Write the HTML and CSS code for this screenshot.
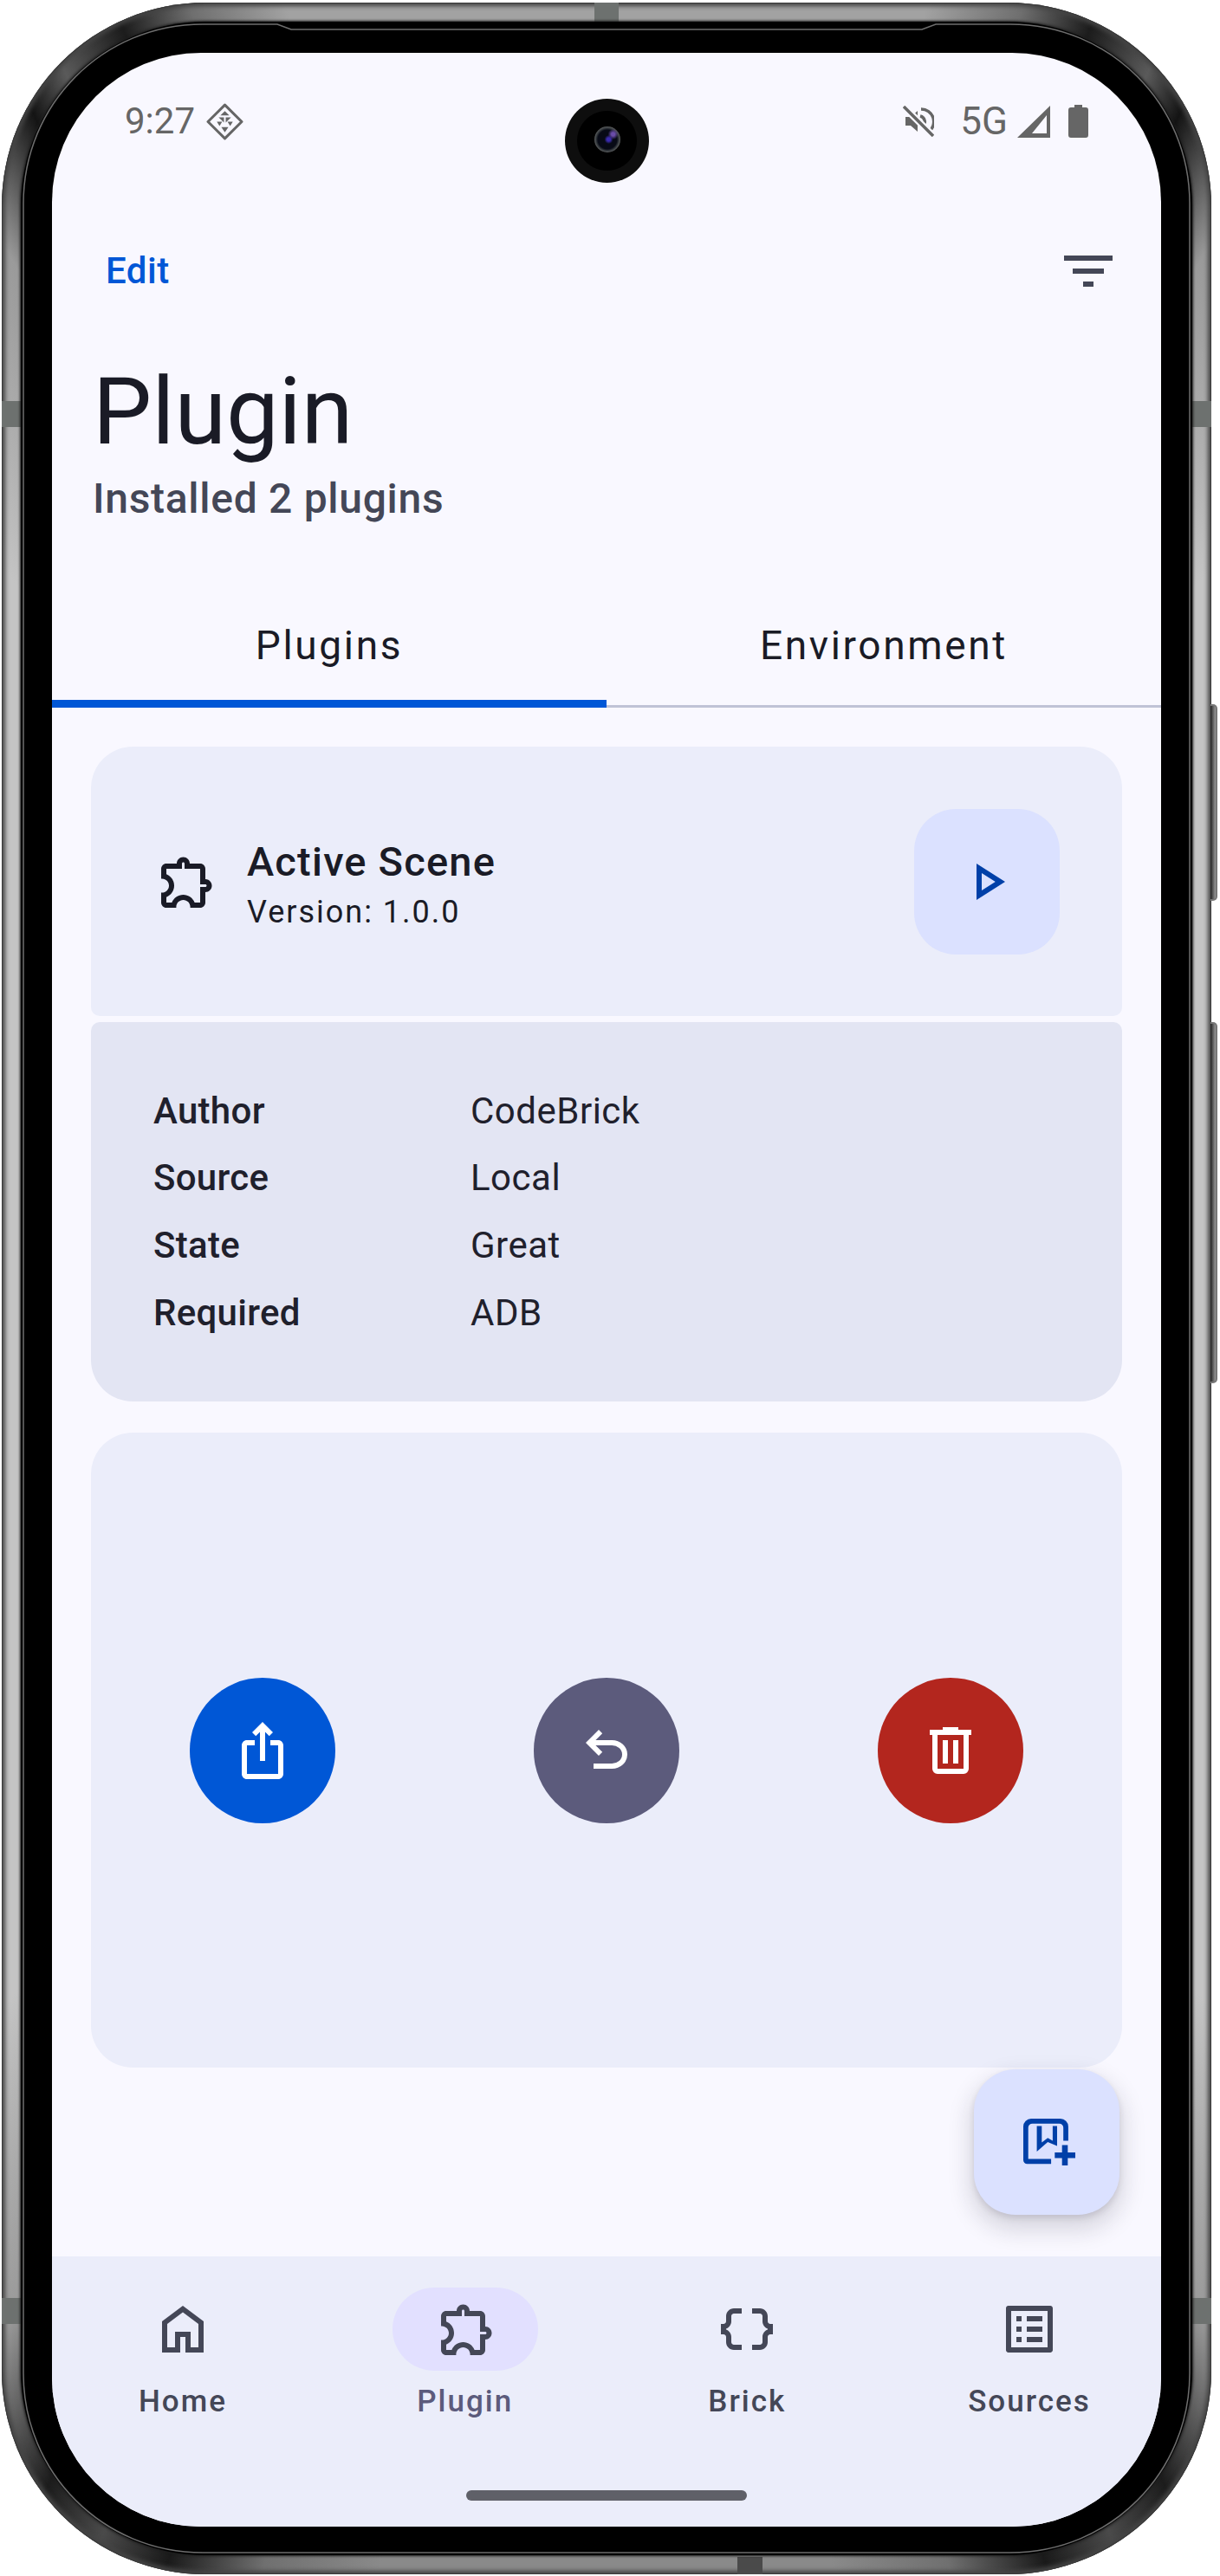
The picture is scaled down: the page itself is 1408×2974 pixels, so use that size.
FILE: index.html
```html
<!DOCTYPE html>
<html lang="en">
<head>
<meta charset="utf-8">
<title>Plugin</title>
<link rel="stylesheet" href="styles.css">
</head>
<body>
<div class="frame">
  <span class="seg seg-top"></span>
  <span class="seg seg-bottom"></span>
  <span class="seg seg-lt"></span>
  <span class="seg seg-lb"></span>
  <span class="seg seg-rt"></span>
  <span class="seg seg-rb"></span>
  <span class="key key-1"></span>
  <span class="key key-2"></span>
  <div class="bezel">
    <svg class="hairline" viewBox="0 0 1352 2925" aria-hidden="true">
      <path d="M296 3H210C95 3 3 95 3 210V2715C3 2830 95 2922 210 2922H1142C1257 2922 1349 2830 1349 2715V210C1349 95 1257 3 1142 3H1056L1040 9H312Z"/>
    </svg>
    <div class="screen">
      <div class="camera"><span class="lens"></span></div>

      <div class="statusbar">
        <div class="status-left">
          <span class="status-text">9:27</span>
          <svg class="sym-diamond" viewBox="0 0 42 42" aria-hidden="true">
            <path class="diamond-outline" d="M21 2 40 21 21 40 2 21Z"/>
            <path class="diamond-fill" d="M21 9l5 5H16ZM14 16h6v6ZM22 16h6l-6 6ZM12 21l6 0-3 5ZM30 21l-6 0 3 5ZM17 27h8l-4 6Z"/>
          </svg>
        </div>
        <div class="status-right">
          <svg class="sym-mute" viewBox="0 0 36 36" aria-hidden="true">
            <path class="mute-fill" d="M3 13h6l8-7v24l-8-7H3Z"/>
            <path class="mute-stroke" d="M21 4a14.500 14.500 0 0 1 9 26M20 12a7 7 0 0 1 3 12"/>
            <path class="mute-cut" d="M1 1 35 35"/>
            <path class="mute-slash" d="M1 1 35 35"/>
          </svg>
          <span class="status-text status-5g">5G</span>
          <svg class="sym-signal" viewBox="0 0 38 37" aria-hidden="true">
            <path fill-rule="evenodd" d="M38 0V37H0ZM34 11 17 32H34Z"/>
          </svg>
          <svg class="sym-battery" viewBox="0 0 23 38" aria-hidden="true">
            <path d="M7 0h9v3h4a3 3 0 0 1 3 3v29a3 3 0 0 1-3 3H3a3 3 0 0 1-3-3V6a3 3 0 0 1 3-3h4Z"/>
          </svg>
        </div>
      </div>

      <div class="topbar">
        <span class="edit">Edit</span>
        <svg class="icon icon-dark" viewBox="0 0 72 72" aria-hidden="true">
          <path d="M8 18H64V24H8ZM18 33H54V39H18ZM30 48H42V54H30Z"/>
        </svg>
      </div>

      <div class="heading">
        <h1 class="title">Plugin</h1>
        <p class="subtitle">Installed 2 plugins</p>
      </div>

      <div class="tabs">
        <div class="tab tab-active">Plugins</div>
        <div class="tab">Environment</div>
      </div>

      <main class="content">
        <section class="card card-head">
          <svg class="icon icon-ink" viewBox="0 0 24 24" aria-hidden="true">
            <path d="M10.500 4.500c.28 0 .5.22.5.5v2h6v6h2c.28 0 .5.22.5.5s-.22.5-.5.5h-2v6h-2.120c-.68-1.750-2.390-3-4.380-3s-3.700 1.250-4.380 3H4v-2.120c1.750-.68 3-2.390 3-4.380 0-1.990-1.240-3.700-2.990-4.380L4 7h6V5c0-.28.22-.5.5-.5m0-2C9.120 2.500 8 3.620 8 5H4c-1.100 0-1.990.9-1.990 2v3.800h.29c1.490 0 2.700 1.210 2.700 2.700s-1.210 2.700-2.700 2.700H2V20c0 1.100.9 2 2 2h3.800v-.3c0-1.490 1.210-2.700 2.700-2.700s2.700 1.210 2.700 2.700v.3H17c1.100 0 2-.9 2-2v-4c1.380 0 2.500-1.120 2.500-2.500S20.380 11 19 11V7c0-1.100-.9-2-2-2h-4c0-1.380-1.120-2.500-2.500-2.500z"/>
          </svg>
          <div class="head-text">
            <div class="head-title">Active Scene</div>
            <div class="head-version">Version: 1.0.0</div>
          </div>
          <button class="tonal-btn">
            <svg class="icon icon-blue" viewBox="0 0 24 24" aria-hidden="true">
              <path d="M8 19V5l11 7-11 7Zm2-3.650L15.250 12 10 8.650v6.700Z"/>
            </svg>
          </button>
        </section>

        <section class="card card-info">
          <div class="info-label">Author</div><div class="info-value">CodeBrick</div>
          <div class="info-label">Source</div><div class="info-value">Local</div>
          <div class="info-label">State</div><div class="info-value">Great</div>
          <div class="info-label">Required</div><div class="info-value">ADB</div>
        </section>

        <section class="card card-actions">
          <button class="round-btn round-blue">
            <svg class="icon icon-white" viewBox="0 0 24 24" aria-hidden="true">
              <path d="M16 5l-1.420 1.420-1.590-1.590V16h-1.980V4.830L9.420 6.420 8 5l4-4 4 4zm4 5v11c0 1.100-.9 2-2 2H6c-1.110 0-2-.9-2-2V10c0-1.110.89-2 2-2h3v2H6v11h12V10h-3V8h3c1.100 0 2 .89 2 2z"/>
            </svg>
          </button>
          <button class="round-btn round-slate">
            <svg class="icon icon-white" viewBox="0 0 24 24" aria-hidden="true">
              <path d="M7 19v-2h7.100q1.575 0 2.738-1T18 13.500q0-1.500-1.162-2.500T14.100 10H7.800l2.600 2.600L9 14 4 9l5-5 1.400 1.400L7.800 8h6.300q2.425 0 4.163 1.575T20 13.500q0 2.350-1.737 3.925T14.100 19H7Z"/>
            </svg>
          </button>
          <button class="round-btn round-red">
            <svg class="icon icon-white" viewBox="0 0 24 24" aria-hidden="true">
              <path d="M7 21q-.825 0-1.412-.587T5 19V6H4V4h5V3h6v1h5v2h-1v13q0 .825-.587 1.413T17 21H7ZM17 6H7v13h10V6ZM9 17h2V8H9v9Zm4 0h2V8h-2v9Z"/>
            </svg>
          </button>
        </section>
      </main>

      <button class="fab">
        <svg class="icon icon-blue" viewBox="0 0 24 24" aria-hidden="true">
          <path d="M6 3H17.300a3 3 0 0 1 3 3V11.500H18.400V6.500a1.600 1.600 0 0 0-1.600-1.600H6.500A1.600 1.600 0 0 0 4.900 6.500V18.500H13.700V20.400H4.500A1.500 1.500 0 0 1 3 18.900V6a3 3 0 0 1 3-3Z"/>
          <path fill-rule="evenodd" d="M8.200 5.800H16V13.500L12.400 12 8.200 15.700ZM10.100 5.800V12.200L12.400 10.400 14.300 11.500V5.800Z"/>
          <path d="M17.900 13.200H20.100V16H23V18.200H20.100V21H17.900V18.200H15.100V16H17.900Z"/>
        </svg>
      </button>

      <nav class="nav">
        <div class="nav-item">
          <span class="pill">
            <svg class="icon icon-dark" viewBox="0 0 24 24" aria-hidden="true">
              <path d="M6 19h3v-6h6v6h3v-9l-6-4.500L6 10v9Zm-2 2V9l8-6 8 6v12h-7v-6h-2v6H4Z"/>
            </svg>
          </span>
          <span class="nav-label">Home</span>
        </div>
        <div class="nav-item nav-active">
          <span class="pill">
            <svg class="icon icon-dark icon-nudge" viewBox="0 0 24 24" aria-hidden="true">
              <path d="M10.500 4.500c.28 0 .5.22.5.5v2h6v6h2c.28 0 .5.22.5.5s-.22.5-.5.5h-2v6h-2.120c-.68-1.750-2.390-3-4.380-3s-3.700 1.250-4.380 3H4v-2.120c1.750-.68 3-2.390 3-4.380 0-1.990-1.240-3.700-2.990-4.380L4 7h6V5c0-.28.22-.5.5-.5m0-2C9.120 2.500 8 3.620 8 5H4c-1.100 0-1.990.9-1.990 2v3.800h.29c1.490 0 2.700 1.210 2.700 2.700s-1.210 2.700-2.700 2.700H2V20c0 1.100.9 2 2 2h3.800v-.3c0-1.490 1.210-2.700 2.700-2.700s2.700 1.210 2.700 2.700v.3H17c1.100 0 2-.9 2-2v-4c1.380 0 2.500-1.120 2.500-2.500S20.380 11 19 11V7c0-1.100-.9-2-2-2h-4c0-1.380-1.120-2.500-2.500-2.500z"/>
            </svg>
          </span>
          <span class="nav-label">Plugin</span>
        </div>
        <div class="nav-item">
          <span class="pill">
            <svg class="icon icon-dark" viewBox="0 0 24 24" aria-hidden="true">
              <path d="M4 7v2c0 .55-.45 1-1 1H2v4h1c.55 0 1 .45 1 1v2c0 1.650 1.350 3 3 3h3v-2H7c-.55 0-1-.45-1-1v-2c0-1.300-.84-2.420-2-2.830v-.34C5.160 11.420 6 10.300 6 9V7c0-.55.45-1 1-1h3V4H7C5.350 4 4 5.350 4 7zM21 10c-.55 0-1-.45-1-1V7c0-1.650-1.350-3-3-3h-3v2h3c.55 0 1 .45 1 1v2c0 1.300.84 2.420 2 2.830v.34c-1.160.41-2 1.520-2 2.830v2c0 .55-.45 1-1 1h-3v2h3c1.650 0 3-1.350 3-3v-2c0-.55.45-1 1-1h1v-4h-1z"/>
            </svg>
          </span>
          <span class="nav-label">Brick</span>
        </div>
        <div class="nav-item">
          <span class="pill">
            <svg class="icon icon-dark" viewBox="0 0 24 24" aria-hidden="true">
              <path d="M19 5v14H5V5h14m1.100-2H3.900c-.5 0-.9.4-.9.9v16.200c0 .4.4.9.9.9h16.200c.4 0 .9-.5.9-.9V3.900c0-.5-.5-.9-.9-.9zM11 7h6v2h-6V7zm0 4h6v2h-6v-2zm0 4h6v2h-6zM7 7h2v2H7zm0 4h2v2H7zm0 4h2v2H7z"/>
            </svg>
          </span>
          <span class="nav-label">Sources</span>
        </div>
        <span class="handle"></span>
      </nav>
    </div>
  </div>
</div>
</body>
</html>
```

FILE: styles.css
```css
* { box-sizing: border-box; }

html, body {
  margin: 0;
  padding: 0;
  background: #fff;
}

body {
  width: 1408px;
  height: 2974px;
  overflow: hidden;
  font-family: Roboto, "Liberation Sans", sans-serif;
}

/* device shell */
.frame {
  position: relative;
  width: 1396px;
  height: 2969px;
  margin: 3px 10px 2px 2px;
  padding: 22px;
  border-radius: 235px;
  background: conic-gradient(
    #a2a2a2 0deg, #a2a2a2 14deg, #6f6f6f 18deg, #1c1c1c 21deg, #5a5a5a 24deg, #141414 26deg, #9a9a9a 30deg,
    #c4c4c4 40deg, #c4c4c4 140deg,
    #9a9a9a 150deg, #1c1c1c 155deg, #4a4a4a 158deg, #1a1a1a 161deg, #707070 165deg,
    #8a8a8a 170deg, #8a8a8a 190deg,
    #707070 195deg, #1a1a1a 199deg, #4a4a4a 202deg, #1c1c1c 205deg, #9a9a9a 210deg,
    #c4c4c4 220deg, #c4c4c4 320deg,
    #9a9a9a 330deg, #141414 334deg, #5a5a5a 336deg, #1c1c1c 339deg, #6f6f6f 342deg, #a2a2a2 346deg, #a2a2a2 360deg
  );
  box-shadow: inset 0 0 0 1px #3a3a3a, inset 0 0 5px 4px #444;
}

.seg {
  position: absolute;
  background: #6d716f;
}
.seg-top { left: 684px; top: 0; width: 28px; height: 22px; }
.seg-bottom { left: 849px; bottom: 0; width: 29px; height: 20px; background: #4a4a4a; }
.seg-lt { left: 0; top: 460px; width: 23px; height: 30px; }
.seg-lb { left: 0; top: 2650px; width: 23px; height: 30px; }
.seg-rt { right: 0; top: 460px; width: 23px; height: 30px; }
.seg-rb { right: 0; top: 2650px; width: 23px; height: 30px; }

.key {
  position: absolute;
  right: -7px;
  width: 8px;
  border: 2px solid #777;
  border-left: 0;
  border-radius: 0 5px 5px 0;
  background: linear-gradient(90deg, #222, #999);
}
.key-1 { top: 810px; height: 227px; }
.key-2 { top: 1177px; height: 417px; }

.bezel {
  position: relative;
  width: 1352px;
  height: 2925px;
  padding: 36px 36px 33px;
  border-radius: 213px;
  background: #000;
  box-shadow: 0 0 3px 1px #1c1c1c;
}

.hairline {
  position: absolute;
  left: 0;
  top: 0;
  width: 1352px;
  height: 2925px;
  fill: none;
  stroke: #6e6e6e;
  stroke-width: 1.500;
}

.screen {
  position: relative;
  display: flex;
  flex-direction: column;
  width: 1280px;
  height: 2856px;
  border-radius: 172px;
  overflow: hidden;
  background: #f9f8ff;
  color: #1a1b26;
}

/* camera */
.camera {
  position: absolute;
  left: 592px;
  top: 53px;
  display: flex;
  align-items: center;
  justify-content: center;
  width: 97px;
  height: 97px;
  border-radius: 50%;
  background: radial-gradient(circle, #000 0 34px, #0e0e0e 35px 48px);
}

.lens {
  width: 30px;
  height: 30px;
  border-radius: 50%;
  background:
    radial-gradient(circle at 55% 50%, #3a2bb0 0 2px, transparent 5px),
    radial-gradient(circle at 72% 30%, #6a4ca8 0 2px, transparent 6px),
    radial-gradient(circle, #070a16 0 11px, #33383c 13px, #5d5f60 15px);
  transform: translateY(-2px);
}

/* status bar */
.statusbar {
  display: flex;
  align-items: flex-start;
  justify-content: space-between;
  height: 168px;
  padding: 57px 84px 0 84px;
  color: #666;
}

.status-left,
.status-right {
  display: flex;
  align-items: center;
}

.status-text {
  font-size: 42px;
  line-height: 44px;
  color: #666;
}

.sym-diamond {
  width: 43px;
  height: 43px;
  margin-left: 13px;
}
.diamond-outline {
  fill: none;
  stroke: #666;
  stroke-width: 3;
  stroke-linejoin: round;
}
.diamond-fill { fill: #666; }

.sym-mute {
  width: 36px;
  height: 36px;
}
.mute-fill { fill: #666; }
.mute-stroke {
  fill: none;
  stroke: #666;
  stroke-width: 3.500;
}
.mute-cut {
  fill: none;
  stroke: #f9f8ff;
  stroke-width: 8;
}
.mute-slash {
  fill: none;
  stroke: #666;
  stroke-width: 3.500;
}

.status-5g {
  margin-left: 30px;
  font-size: 44px;
}

.sym-signal {
  width: 38px;
  height: 37px;
  margin-left: 11px;
  fill: #666;
}

.sym-battery {
  width: 23px;
  height: 38px;
  margin-left: 21px;
  fill: #666;
}

/* top bar */
.topbar {
  display: flex;
  align-items: center;
  justify-content: space-between;
  height: 168px;
  padding: 0 48px 0 62px;
}

.edit {
  font-size: 42px;
  font-weight: 500;
  line-height: 48px;
  letter-spacing: 0.500px;
  color: #0057d6;
}

.icon {
  display: block;
  width: 72px;
  height: 72px;
  flex: none;
}
.icon-dark { fill: #444757; }
.icon-ink { fill: #1a1b26; }
.icon-blue { fill: #0040a8; }
.icon-white { fill: #fff; }
.icon-nudge { margin-left: 5px; }

/* heading */
.heading {
  padding: 18px 45px 0 47px;
}

.title {
  margin: 0;
  font-size: 108px;
  font-weight: 400;
  line-height: 120px;
  color: #1a1b26;
}

.subtitle {
  margin: 9px 0 0;
  font-size: 48px;
  font-weight: 500;
  line-height: 64px;
  letter-spacing: 0.700px;
  color: #444757;
}

/* tabs */
.tabs {
  display: flex;
  margin-top: 60px;
}

.tab {
  position: relative;
  flex: 1;
  height: 149px;
  padding-top: 47px;
  border-bottom: 3px solid #c0c3d6;
  font-size: 46px;
  line-height: 60px;
  letter-spacing: 2.650px;
  text-align: center;
  color: #1a1b26;
}

.tab-active::after {
  content: "";
  position: absolute;
  left: 0;
  right: 0;
  bottom: -3px;
  height: 9px;
  background: #0057d6;
}

/* content */
.content {
  flex: 1;
  display: flex;
  flex-direction: column;
  padding: 45px 45px 0;
}

.card { width: 1190px; }

.card-head {
  display: flex;
  align-items: center;
  height: 311px;
  padding: 0 72px 0 75px;
  border-radius: 48px 48px 10px 10px;
  background: #ebedfa;
}

.head-text {
  flex: 1;
  margin-left: 33px;
}

.head-title {
  font-size: 47px;
  font-weight: 500;
  line-height: 71px;
  letter-spacing: 1.200px;
  color: #1a1b26;
}

.head-version {
  font-size: 36px;
  line-height: 47px;
  letter-spacing: 2px;
  color: #1a1b26;
}

.tonal-btn {
  display: flex;
  align-items: center;
  justify-content: center;
  width: 168px;
  height: 168px;
  padding: 0;
  border: 0;
  border-radius: 48px;
  background: #dbe1ff;
}

.card-info {
  display: grid;
  grid-template-columns: 366px 1fr;
  grid-auto-rows: 77.600px;
  align-items: center;
  height: 438px;
  margin-top: 7px;
  padding: 64px 72px 0;
  border-radius: 10px 10px 48px 48px;
  background: #e3e5f3;
}

.info-label {
  font-size: 42px;
  font-weight: 500;
  line-height: 52px;
  letter-spacing: 0.300px;
  color: #1f202c;
}

.info-value {
  font-size: 42px;
  line-height: 52px;
  letter-spacing: 0.500px;
  color: #1f202c;
}

.card-actions {
  display: flex;
  align-items: center;
  justify-content: space-between;
  height: 733px;
  margin-top: 36px;
  padding: 0 114px;
  border-radius: 48px;
  background: #ebedfa;
}

.round-btn {
  display: flex;
  align-items: center;
  justify-content: center;
  width: 168px;
  height: 168px;
  padding: 0;
  border: 0;
  border-radius: 50%;
}
.round-blue { background: #0057d6; }
.round-slate { background: #5c5b7c; }
.round-red { background: #b3261e; }

/* fab */
.fab {
  position: absolute;
  right: 48px;
  bottom: 360px;
  display: flex;
  align-items: center;
  justify-content: center;
  width: 168px;
  height: 168px;
  padding: 0;
  border: 0;
  border-radius: 48px;
  background: #dbe1ff;
  box-shadow: 0 13px 26px 5px rgba(30, 25, 50, 0.15), 0 4px 7px rgba(30, 25, 50, 0.12);
}

/* nav */
.nav {
  position: relative;
  display: flex;
  justify-content: space-between;
  height: 312px;
  padding: 36px 68px 0 67px;
  background: #ebedfa;
}

.nav-item {
  display: flex;
  flex-direction: column;
  align-items: center;
  width: 168px;
}

.pill {
  display: flex;
  align-items: center;
  justify-content: center;
  width: 168px;
  height: 96px;
  border-radius: 48px;
}

.nav-active .pill { background: #e2e0ff; }

.nav-label {
  margin-top: 14px;
  font-size: 35px;
  font-weight: 500;
  line-height: 44px;
  letter-spacing: 2px;
  white-space: nowrap;
  color: #444757;
}

.nav-active .nav-label { color: #5c5b7c; }

.handle {
  position: absolute;
  left: 478px;
  bottom: 30px;
  width: 324px;
  height: 12px;
  border-radius: 6px;
  background: #5f6068;
}
```
